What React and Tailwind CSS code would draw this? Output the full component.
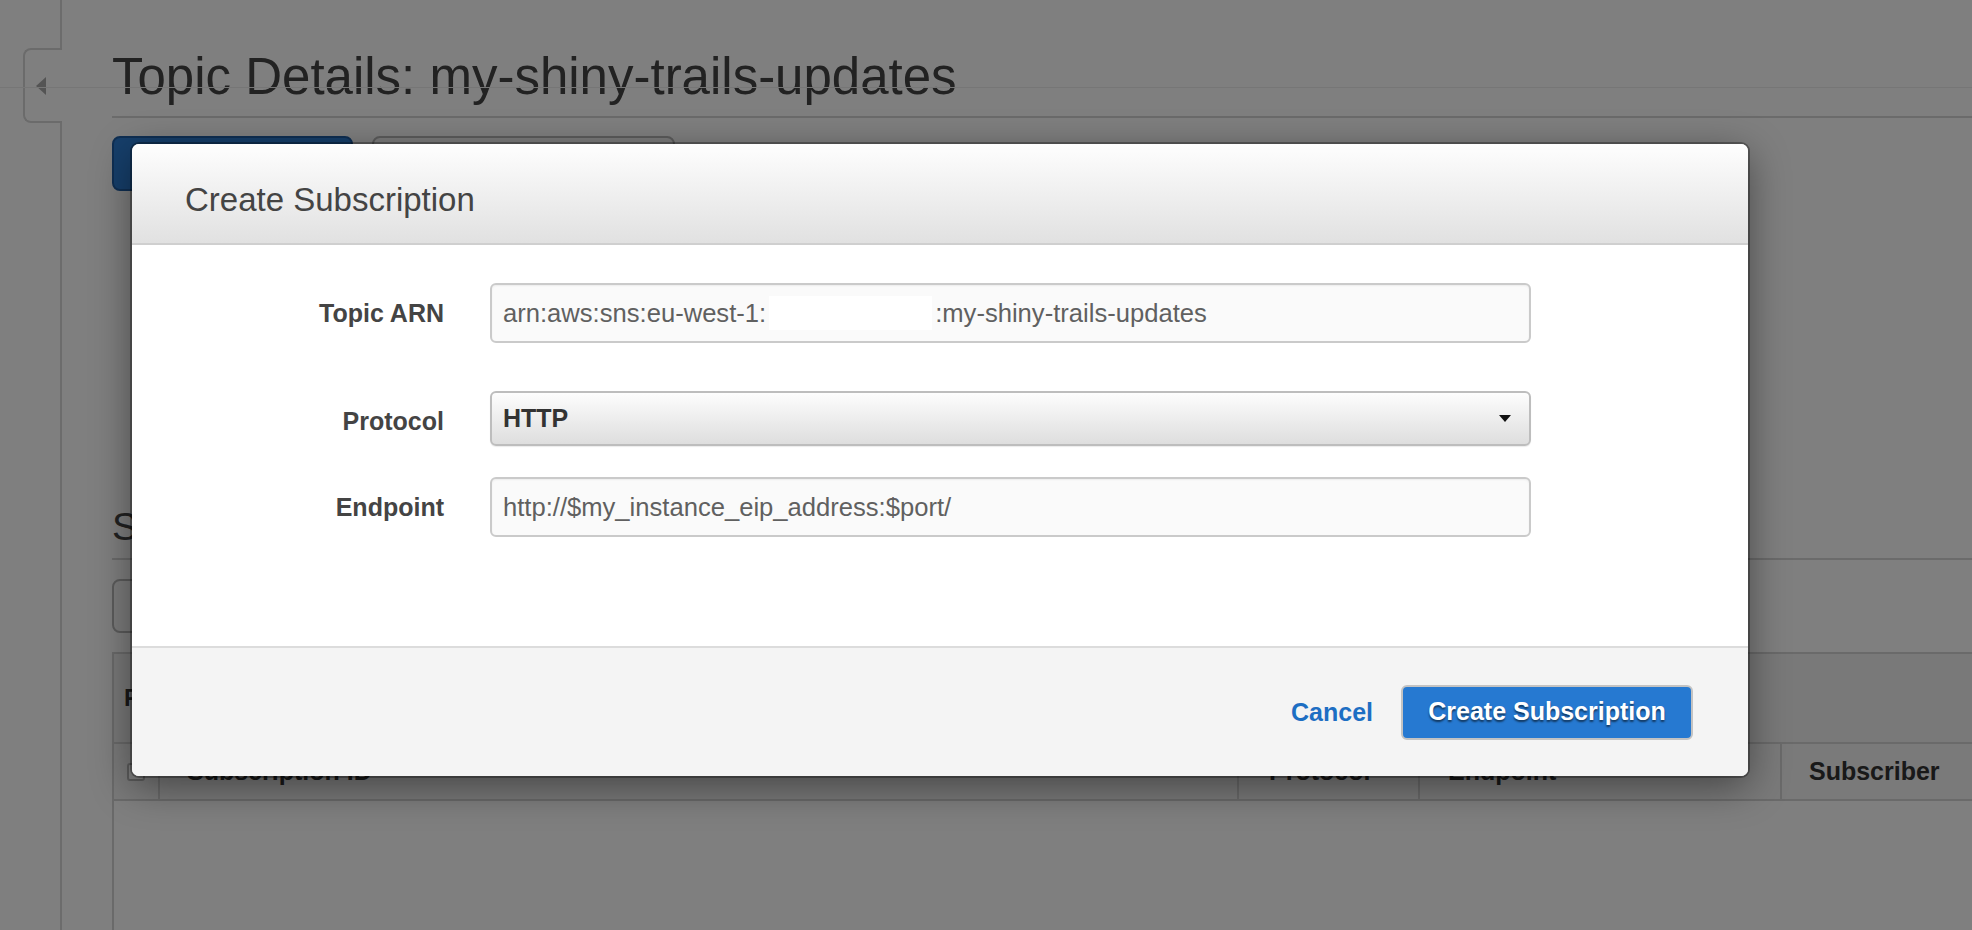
import React from 'react';

function Field({ label, className, children }) {
  return (
    <div className={`flex items-start gap-[46px] ${className}`}>
      <label className="w-[312px] shrink-0 pt-[18px] text-right text-[25px] leading-[25px] font-bold text-[#444]">
        {label}
      </label>
      <div className="w-[1041px]">{children}</div>
    </div>
  );
}

function PageBehind() {
  return (
    <div className="flex h-[930px] bg-white">
      {/* left nav, collapsed */}
      <div className="w-[62px] shrink-0 border-r-2 border-[#d9d9d9] pt-[48px]">
        <div className="ml-[23px] flex h-[75px] w-[39px] items-center rounded-l-[8px] border-2 border-r-0 border-[#d6d6d6] bg-white pl-[11px]">
          <svg width="10" height="18" viewBox="0 0 10 18">
            <polygon points="10,0 0,9 10,18" fill="#a9a9a9" />
          </svg>
        </div>
      </div>

      <div className="flex-1 pl-[50px] text-[#444]">
        <h1 className="border-b-2 border-[#d6d6d6] pt-[51px] pb-[14px] text-[51px] leading-[51px] font-normal">
          Topic Details: my-shiny-trails-updates
        </h1>
        <div className="mt-[18px] flex gap-[19px]">
          <button className="h-[55px] w-[241px] rounded-[8px] border-2 border-[#1f5ea6] bg-[#2d7ed6] text-[25px] font-bold text-white">
            Publish to topic
          </button>
          <button className="h-[55px] w-[303px] rounded-[8px] border-2 border-[#b8b8b8] bg-[#f8f8f8] text-[25px] font-bold text-[#444]">
            Other topic actions
          </button>
        </div>

        <h2 className="mt-[316px] border-b-2 border-[#d6d6d6] pb-[12px] text-[39px] leading-[39px] font-normal">
          Subscriptions
        </h2>
        <button className="mt-[19px] block h-[54px] w-[230px] rounded-[8px] border-2 border-[#b8b8b8] bg-[#f8f8f8] text-[25px] font-bold text-[#444]">
          Create subscription
        </button>

        <div className="mt-[19px] border-t-2 border-l-2 border-[#d4d4d4]">
          <div className="flex h-[88px] items-center bg-[#f2f2f2] pl-[10px] text-[24px] font-bold text-[#333]">
            Filter
          </div>
          <div className="flex h-[59px] border-y-2 border-[#d4d4d4] bg-[#f4f4f4] text-[25px] font-bold text-[#333]">
            <div className="flex w-[46px] items-center justify-center border-r-2 border-[#d4d4d4]">
              <span className="h-[18px] w-[18px] rounded-[3px] border-2 border-[#b9b9b9] bg-white" />
            </div>
            <div className="flex w-[1079px] items-center border-r-2 border-[#d4d4d4] pl-[27px]">Subscription ID</div>
            <div className="flex w-[181px] items-center border-r-2 border-[#d4d4d4] pl-[30px]">Protocol</div>
            <div className="flex w-[362px] items-center border-r-2 border-[#d4d4d4] pl-[28px]">Endpoint</div>
            <div className="flex flex-1 items-center pl-[27px]">Subscriber</div>
          </div>
          <div className="h-[200px] bg-white" />
        </div>
      </div>
    </div>
  );
}

function CreateSubscriptionModal() {
  return (
    <div className="w-[1616px] overflow-hidden rounded-[7px] bg-white shadow-[0_10px_40px_rgba(0,0,0,0.45)] ring-2 ring-black/30">
      <div className="h-[101px] border-b-2 border-[#cfcfcf] bg-gradient-to-b from-[#fefefe] to-[#e1e1e1] pt-[39px] pl-[53px] text-[33px] leading-[33px] text-[#444]">
        Create Subscription
      </div>

      <div className="h-[401px] pt-[38px]">
        <Field label="Topic ARN">
          <div className="flex h-[60px] items-center rounded-[6px] border-2 border-[#cacaca] bg-[#fafafa] pl-[11px] text-[25.6px] leading-[25px] text-[#606060] shadow-[inset_0_1px_2px_rgba(0,0,0,0.06)]">
            arn:aws:sns:eu-west-1:
            <span className="mx-[3px] inline-block h-[34px] w-[163px] bg-white" />
            :my-shiny-trails-updates
          </div>
        </Field>

        <Field label="Protocol" className="mt-[48px]">
          <div className="flex h-[55px] items-center justify-between rounded-[6px] border-2 border-[#bdbdbd] bg-gradient-to-b from-[#fdfdfd] to-[#dedede] pr-[18px] pl-[11px] text-[25px] leading-[25px] font-bold text-[#333] shadow-[0_1px_1px_rgba(0,0,0,0.08)]">
            HTTP
            <svg width="12" height="7" viewBox="0 0 12 7">
              <polygon points="0,0 12,0 6,7" fill="#111" />
            </svg>
          </div>
        </Field>

        <Field label="Endpoint" className="mt-[31px]">
          <input
            readOnly
            defaultValue="http://$my_instance_eip_address:$port/"
            className="h-[60px] w-full rounded-[6px] border-2 border-[#cacaca] bg-[#fafafa] pl-[11px] text-[25.6px] leading-[25px] text-[#606060] shadow-[inset_0_1px_2px_rgba(0,0,0,0.06)] outline-none"
          />
        </Field>
      </div>

      <div className="flex h-[130px] items-center justify-end gap-[28px] border-t-2 border-[#dcdcdc] bg-[#f4f4f4] pr-[55px]">
        <a className="text-[25px] leading-[25px] font-bold text-[#1d6ec3]">Cancel</a>
        <button className="h-[55px] w-[292px] rounded-[6px] border-2 border-[#c3c3c3] bg-[#2679d1] text-[25px] font-bold text-white [text-shadow:0_2px_2px_rgba(0,0,0,0.55)]">
          Create Subscription
        </button>
      </div>
    </div>
  );
}

export default function App() {
  return (
    <div className="relative h-[930px] w-full overflow-hidden font-['Liberation_Sans',Arial,sans-serif]">
      <PageBehind />
      <div className="absolute top-[87px] right-0 left-0 h-px bg-[#ececec]" />
      <div className="absolute inset-0 bg-black/50 pt-[144px] pl-[132px]">
        <CreateSubscriptionModal />
      </div>
    </div>
  );
}
